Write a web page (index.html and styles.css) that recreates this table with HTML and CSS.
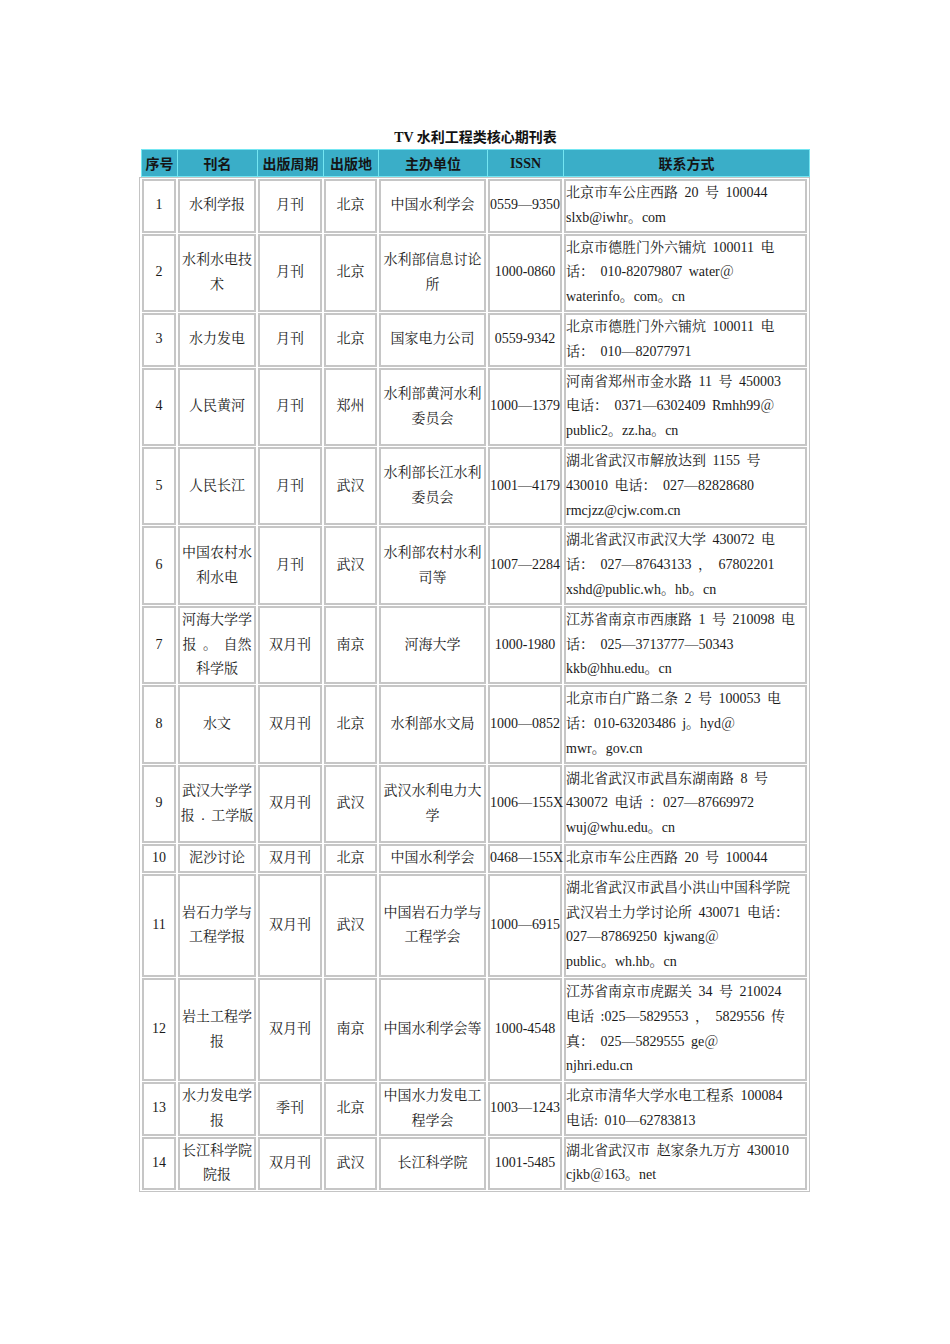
FILE: index.html
```html
<!DOCTYPE html>
<html lang="zh-CN">
<head>
<meta charset="utf-8">
<title>TV 水利工程类核心期刊表</title>
<link rel="stylesheet" href="styles.css">
</head>
<body>
<div class="page">
  <div class="title">TV 水利工程类核心期刊表</div>
  <table class="head">
    <colgroup>
      <col class="h1"><col class="h2"><col class="h3"><col class="h4"><col class="h5"><col class="h6"><col class="h7">
    </colgroup>
    <tr>
      <th>序号</th><th>刊名</th><th>出版周期</th><th>出版地</th><th>主办单位</th><th class="latin">ISSN</th><th>联系方式</th>
    </tr>
  </table>
  <table class="body">
    <colgroup>
      <col class="b1"><col class="b2"><col class="b3"><col class="b4"><col class="b5"><col class="b6"><col class="b7">
    </colgroup>
    <tr><td>1</td><td>水利学报</td><td>月刊</td><td>北京</td><td>中国水利学会</td><td class="issn">0559—9350</td><td class="contact">北京市车公庄西路 20 号 100044<br>slxb@iwhr。com</td></tr>
    <tr><td>2</td><td>水利水电技术</td><td>月刊</td><td>北京</td><td>水利部信息讨论所</td><td class="issn">1000-0860</td><td class="contact">北京市德胜门外六铺炕 100011 电<br>话： 010-82079807 water＠<br>waterinfo。com。cn</td></tr>
    <tr><td>3</td><td>水力发电</td><td>月刊</td><td>北京</td><td>国家电力公司</td><td class="issn">0559-9342</td><td class="contact">北京市德胜门外六铺炕 100011 电<br>话： 010—82077971</td></tr>
    <tr><td>4</td><td>人民黄河</td><td>月刊</td><td>郑州</td><td>水利部黄河水利委员会</td><td class="issn">1000—1379</td><td class="contact">河南省郑州市金水路 11 号 450003<br>电话： 0371—6302409 Rmhh99＠<br>public2。zz.ha。cn</td></tr>
    <tr><td>5</td><td>人民长江</td><td>月刊</td><td>武汉</td><td>水利部长江水利委员会</td><td class="issn">1001—4179</td><td class="contact">湖北省武汉市解放达到 1155 号<br>430010 电话： 027—82828680<br>rmcjzz@cjw.com.cn</td></tr>
    <tr><td>6</td><td>中国农村水利水电</td><td>月刊</td><td>武汉</td><td>水利部农村水利司等</td><td class="issn">1007—2284</td><td class="contact">湖北省武汉市武汉大学 430072 电<br>话： 027—87643133 ， 67802201<br>xshd@public.wh。hb。cn</td></tr>
    <tr><td>7</td><td>河海大学学<br>报 。 自然<br>科学版</td><td>双月刊</td><td>南京</td><td>河海大学</td><td class="issn">1000-1980</td><td class="contact">江苏省南京市西康路 1 号 210098 电<br>话： 025—3713777—50343<br>kkb@hhu.edu。cn</td></tr>
    <tr><td>8</td><td>水文</td><td>双月刊</td><td>北京</td><td>水利部水文局</td><td class="issn">1000—0852</td><td class="contact">北京市白广路二条 2 号 100053 电<br>话：010-63203486 j。hyd＠<br>mwr。gov.cn</td></tr>
    <tr><td>9</td><td>武汉大学学<br>报 . 工学版</td><td>双月刊</td><td>武汉</td><td>武汉水利电力大学</td><td class="issn">1006—155X</td><td class="contact">湖北省武汉市武昌东湖南路 8 号<br>430072 电话 ：027—87669972<br>wuj@whu.edu。cn</td></tr>
    <tr><td>10</td><td>泥沙讨论</td><td>双月刊</td><td>北京</td><td>中国水利学会</td><td class="issn">0468—155X</td><td class="contact">北京市车公庄西路 20 号 100044</td></tr>
    <tr><td>11</td><td>岩石力学与工程学报</td><td>双月刊</td><td>武汉</td><td>中国岩石力学与工程学会</td><td class="issn">1000—6915</td><td class="contact">湖北省武汉市武昌小洪山中国科学院<br>武汉岩土力学讨论所 430071 电话：<br>027—87869250 kjwang＠<br>public。wh.hb。cn</td></tr>
    <tr><td>12</td><td>岩土工程学报</td><td>双月刊</td><td>南京</td><td>中国水利学会等</td><td class="issn">1000-4548</td><td class="contact">江苏省南京市虎踞关 34 号 210024<br>电话 :025—5829553 ， 5829556 传<br>真： 025—5829555 ge＠<br>njhri.edu.cn</td></tr>
    <tr><td>13</td><td>水力发电学报</td><td>季刊</td><td>北京</td><td>中国水力发电工程学会</td><td class="issn">1003—1243</td><td class="contact">北京市清华大学水电工程系 100084<br>电话: 010—62783813</td></tr>
    <tr><td>14</td><td>长江科学院院报</td><td>双月刊</td><td>武汉</td><td>长江科学院</td><td class="issn">1001-5485</td><td class="contact">湖北省武汉市 赵家条九万方 430010<br>cjkb＠163。net</td></tr>
  </table>
</div>
</body>
</html>
```

FILE: styles.css
```css
html, body {
  margin: 0;
  padding: 0;
  background: #ffffff;
}

.page {
  width: 671px;
  padding-left: 139px;
  padding-top: 129px;
}

.title {
  font-family: "Liberation Serif", "Noto Sans CJK SC", sans-serif;
  font-weight: bold;
  font-size: 14px;
  line-height: 18px;
  color: #111;
  text-align: center;
  margin-bottom: 2px;
  padding-left: 2px;
}

table {
  table-layout: fixed;
}

/* header table (collapsed borders) */
.head {
  border-collapse: collapse;
  background: #3aaec8;
  margin-left: 2px;
  width: 668px;
}

col.h1 { width: 36px; }
col.h2 { width: 80px; }
col.h3 { width: 66px; }
col.h4 { width: 55px; }
col.h5 { width: 109px; }
col.h6 { width: 76px; }
col.h7 { width: 246px; }

.head th {
  border: 1px solid #74e6f2;
  height: 25px;
  padding: 0;
  font-family: "Noto Sans CJK SC", sans-serif;
  font-weight: bold;
  font-size: 14px;
  line-height: 25px;
  color: #151515;
  text-align: center;
  vertical-align: middle;
}

.head th.latin {
  font-family: "Liberation Serif", "Noto Sans CJK SC", serif;
  padding-top: 1px;
}

/* body table (separated, bevel-like borders) */
.body {
  border-collapse: separate;
  border-spacing: 2px 1px;
  border: 1px solid #c4c4c4;
  width: 671px;
}

col.b1 { width: 34px; }
col.b2 { width: 78px; }
col.b3 { width: 64px; }
col.b4 { width: 53px; }
col.b5 { width: 107px; }
col.b6 { width: 74px; }
col.b7 { width: 243px; }

.body td {
  border: 2px solid #c6c6c6;
  padding: 0;
  font-family: "Liberation Serif", "Noto Serif CJK SC", "Noto Sans CJK SC", serif;
  font-size: 14px;
  line-height: 24.8px;
  color: #1a1a1a;
  text-align: center;
  vertical-align: middle;
  word-spacing: 3px;
  overflow: hidden;
}

.body td.issn {
  white-space: nowrap;
  overflow: visible;
}

.body td.contact {
  text-align: left;
  white-space: nowrap;
}
```
